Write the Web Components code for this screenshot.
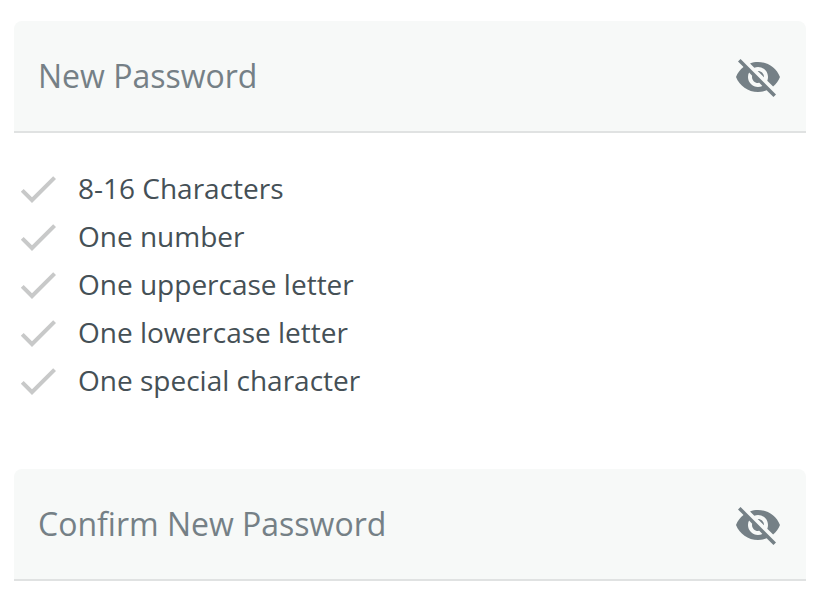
<!DOCTYPE html>
<html lang="en"><head><meta charset="utf-8"><title>Password</title>
<style>body{margin:0;background:#fff;font-family:"Open Sans","Noto Sans",sans-serif}</style></head>
<body><password-form></password-form>
<script>
class PasswordField extends HTMLElement{
constructor(){super();this.attachShadow({mode:'open'}).innerHTML=`<style>
:host{display:flex;align-items:center;justify-content:space-between;box-sizing:border-box;height:112px;padding:2px 24px 0;background:#f7f9f8;border-bottom:2px solid #e0e2e2;border-radius:8px 8px 0 0;color:#758086;font-size:32px;line-height:44px}
svg{display:block;width:48px;height:48px;fill:#758086}
span{padding-bottom:2px}
</style><span><slot></slot></span>
<svg viewBox="0 0 24 24"><path d="M12 7c2.76 0 5 2.24 5 5 0 .65-.13 1.26-.36 1.83l2.92 2.92c1.51-1.26 2.7-2.89 3.43-4.75-1.73-4.39-6-7.5-11-7.5-1.4 0-2.74.25-3.98.7l2.16 2.16C10.74 7.13 11.35 7 12 7zM2 4.27l2.28 2.28.46.46C3.08 8.3 1.78 10.02 1 12c1.73 4.39 6 7.5 11 7.5 1.55 0 3.03-.3 4.38-.84l.42.42L19.73 22 21 20.73 3.27 3 2 4.27zM7.53 9.8l1.55 1.55c-.05.21-.08.43-.08.65 0 1.66 1.34 3 3 3 .22 0 .44-.03.65-.08l1.55 1.55c-.67.33-1.41.53-2.2.53-2.76 0-5-2.24-5-5 0-.79.2-1.53.53-2.2zm4.31-.78l3.15 3.15.02-.16c0-1.66-1.34-3-3-3l-.17.01z"/></svg>`}}
customElements.define('password-field',PasswordField);
class PasswordRule extends HTMLElement{
constructor(){super();this.attachShadow({mode:'open'}).innerHTML=`<style>
:host{display:flex;align-items:center;gap:16px;height:48px;color:#455056;font-size:28px;line-height:38px}
svg{display:block;width:48px;height:48px;fill:#c8c9c9}
span{padding-bottom:2px}
</style><svg viewBox="0 0 24 24"><path d="M9 16.17L4.83 12l-1.42 1.41L9 19 21 7l-1.41-1.41z"/></svg><span><slot></slot></span>`}}
customElements.define('password-rule',PasswordRule);
class PasswordForm extends HTMLElement{
constructor(){super();this.attachShadow({mode:'open'}).innerHTML=`<style>
:host{display:block;padding:21px 16px 0 14px}
.rules{padding:32px 0 64px}
</style><password-field>New Password</password-field>
<div class="rules"><password-rule>8-16 Characters</password-rule><password-rule>One number</password-rule><password-rule>One uppercase letter</password-rule><password-rule>One lowercase letter</password-rule><password-rule>One special character</password-rule></div>
<password-field>Confirm New Password</password-field>`}}
customElements.define('password-form',PasswordForm);
</script></body></html>
